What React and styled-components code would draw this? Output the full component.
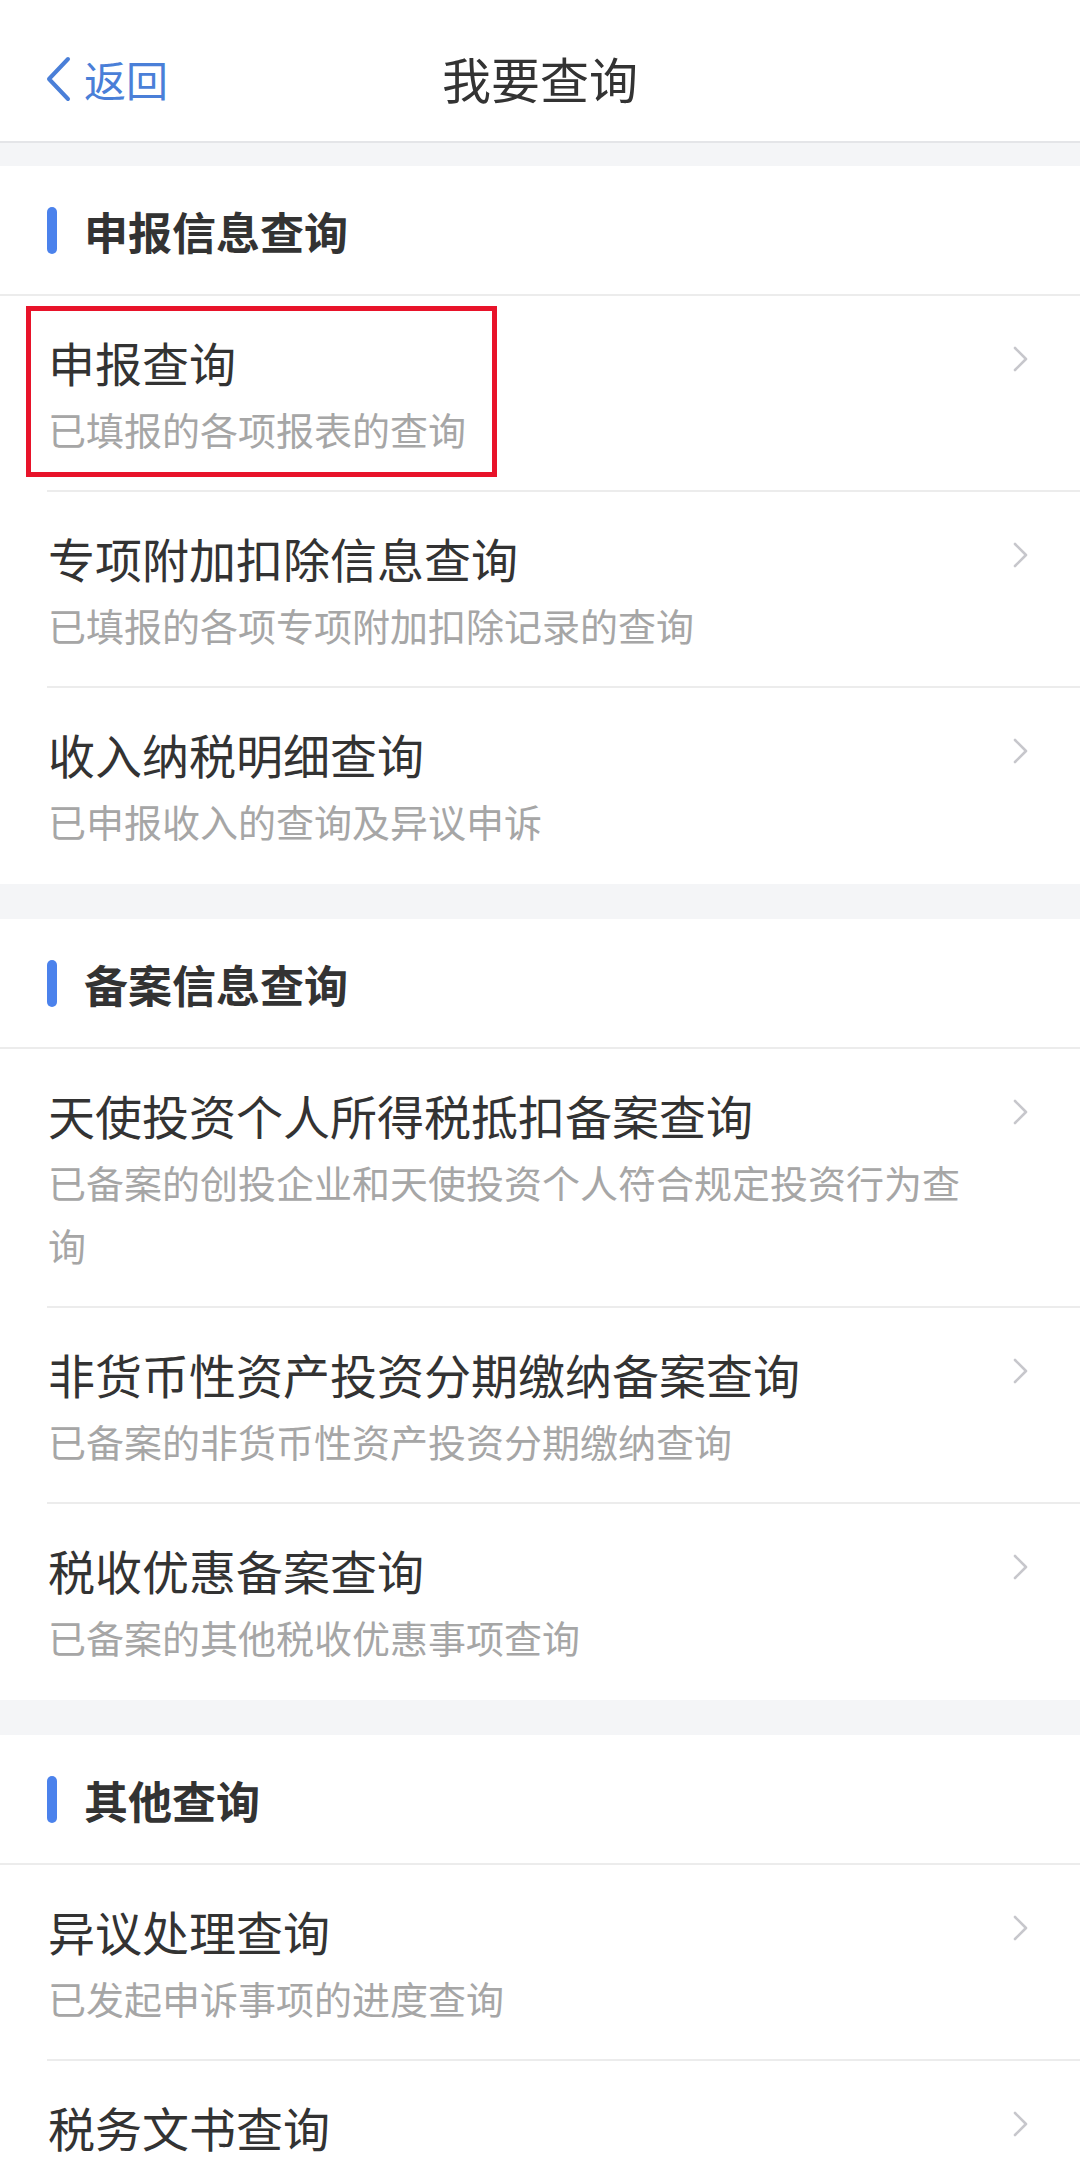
import React from "react";
import styled, { createGlobalStyle } from "styled-components";

const Global = createGlobalStyle`
  html, body { margin: 0; padding: 0; background: #f4f5f7; }
  body { font-family: "Noto Sans CJK SC", "Noto Sans", sans-serif; }
  * { box-sizing: border-box; }
`;

const Page = styled.div`
  width: 1080px;
  min-height: 2165px;
  background: #f4f5f7;
  overflow: hidden;
`;

const NavBar = styled.header`
  height: 143px;
  background: #ffffff;
  border-bottom: 2px solid #e4e5e8;
  display: grid;
  grid-template-columns: 1fr auto 1fr;
  align-items: center;
  padding: 0 45px;
  margin-bottom: 23px;
`;

const Back = styled.div`
  display: flex;
  align-items: center;
  gap: 13px;
  color: #4a7fd8;
  font-size: 42px;
  line-height: 1;
  padding-top: 16px;
`;

const Title = styled.h1`
  margin: 0;
  font-size: 49px;
  font-weight: 400;
  color: #333333;
  line-height: 1;
  padding-top: 14px;
`;

const Section = styled.section`
  background: #ffffff;
  margin-bottom: ${(p) => (p.$last ? "0" : "35px")};
`;

const SectionHead = styled.div`
  height: 130px;
  display: flex;
  align-items: center;
  gap: 27px;
  padding-left: 47px;
  border-bottom: 2px solid #ececec;
`;

const Bar = styled.span`
  width: 10px;
  height: 47px;
  border-radius: 5px;
  background: #4b82ec;
`;

const SectionTitle = styled.h2`
  margin: 0;
  font-size: 44px;
  font-weight: 700;
  color: #333333;
  line-height: 1;
  padding-top: 2px;
`;

const Row = styled.div`
  position: relative;
  display: flex;
  align-items: flex-start;
  padding: 38px 50px 32px 48px;
  &:not(:last-child)::after {
    content: "";
    position: absolute;
    left: 47px;
    right: 0;
    bottom: 0;
    height: 2px;
    background: #ececec;
  }
`;

const RowText = styled.div`
  flex: 1;
  max-width: 930px;
`;

const RowTitle = styled.div`
  font-size: 47px;
  line-height: 56px;
  color: #333333;
  margin-bottom: 7px;
`;

const RowSub = styled.div`
  font-size: 38px;
  line-height: 63px;
  color: #a6a6a6;
`;

const Chevron = styled.svg`
  margin-left: auto;
  margin-top: 12px;
  flex: none;
`;

const Highlight = styled.div`
  position: absolute;
  left: 26px;
  top: 10px;
  width: 471px;
  height: 171px;
  border: 5px solid #e8132a;
  pointer-events: none;
`;

const sections = [
  {
    title: "申报信息查询",
    items: [
      { t: "申报查询", s: "已填报的各项报表的查询", hl: true },
      { t: "专项附加扣除信息查询", s: "已填报的各项专项附加扣除记录的查询" },
      { t: "收入纳税明细查询", s: "已申报收入的查询及异议申诉" },
    ],
  },
  {
    title: "备案信息查询",
    items: [
      {
        t: "天使投资个人所得税抵扣备案查询",
        s: "已备案的创投企业和天使投资个人符合规定投资行为查询",
      },
      { t: "非货币性资产投资分期缴纳备案查询", s: "已备案的非货币性资产投资分期缴纳查询" },
      { t: "税收优惠备案查询", s: "已备案的其他税收优惠事项查询" },
    ],
  },
  {
    title: "其他查询",
    items: [
      { t: "异议处理查询", s: "已发起申诉事项的进度查询" },
      { t: "税务文书查询" },
    ],
  },
];

const ArrowRight = () => (
  <Chevron width="18" height="26" viewBox="0 0 18 26">
    <path d="M3 2 L14 13 L3 24" fill="none" stroke="#c7c7cc" strokeWidth="2.6" strokeLinecap="round" strokeLinejoin="round" />
  </Chevron>
);

export default function App() {
  return (
    <Page>
      <Global />
      <NavBar>
        <Back>
          <svg width="26" height="46" viewBox="0 0 26 46">
            <path d="M23 3 L4 23 L23 43" fill="none" stroke="#4a7fd8" strokeWidth="4" strokeLinecap="round" strokeLinejoin="round" />
          </svg>
          <span>返回</span>
        </Back>
        <Title>我要查询</Title>
        <div />
      </NavBar>
      {sections.map((sec, i) => (
        <Section key={sec.title} $last={i === sections.length - 1}>
          <SectionHead>
            <Bar />
            <SectionTitle>{sec.title}</SectionTitle>
          </SectionHead>
          {sec.items.map((it) => (
            <Row key={it.t}>
              <RowText>
                <RowTitle>{it.t}</RowTitle>
                {it.s && <RowSub>{it.s}</RowSub>}
              </RowText>
              <ArrowRight />
              {it.hl && <Highlight />}
            </Row>
          ))}
        </Section>
      ))}
    </Page>
  );
}
